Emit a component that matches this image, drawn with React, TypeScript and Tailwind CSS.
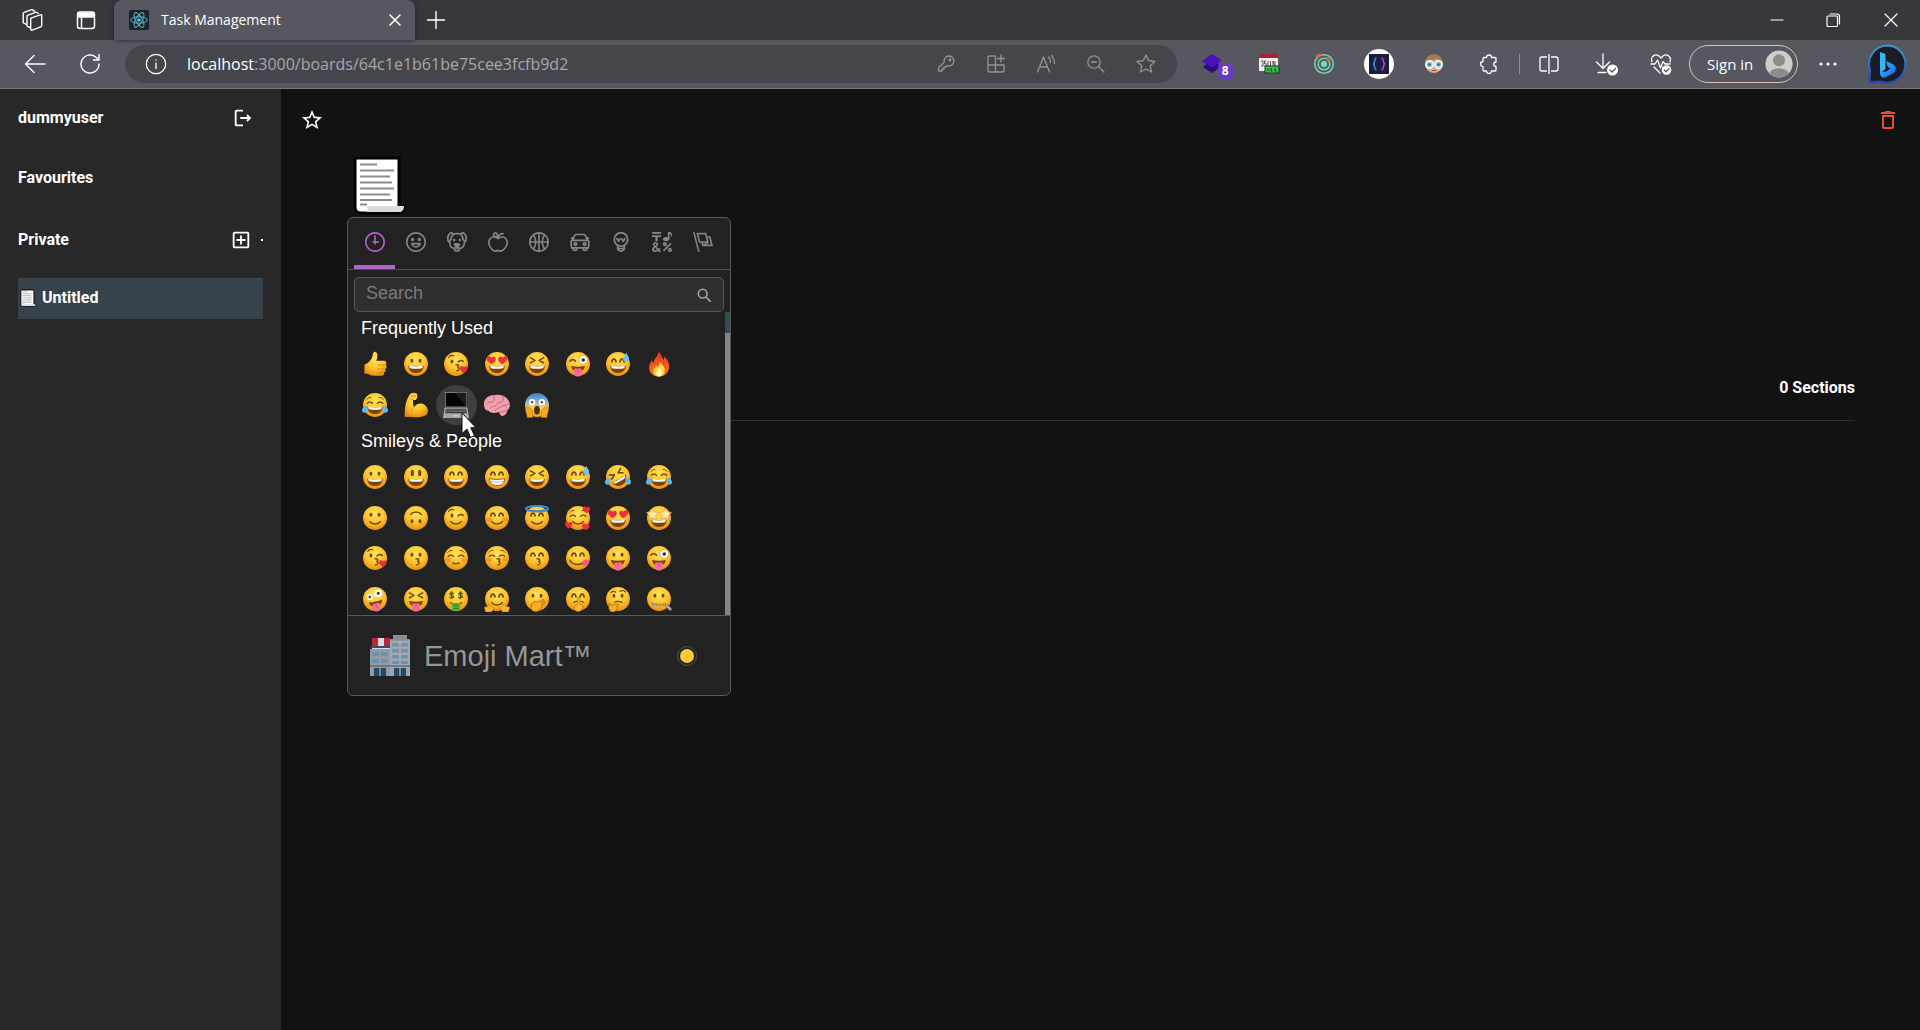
import type { ReactNode } from "react";
import { MdDeleteOutline, MdOutlineAddBox, MdOutlineLogout, MdStarBorder } from "react-icons/md";

const INK = "#764609";

/* ---------- Emoji building blocks (32 x 32 canvas) ---------- */

const eyes: Record<string, ReactNode> = {
  dots: (
    <g fill={INK}>
      <ellipse cx="11" cy="12" rx="1.8" ry="2.5" />
      <ellipse cx="21" cy="12" rx="1.8" ry="2.5" />
    </g>
  ),
  tall: (
    <g fill={INK}>
      <ellipse cx="11.5" cy="11" rx="2" ry="4" />
      <ellipse cx="20.5" cy="11" rx="2" ry="4" />
    </g>
  ),
  happy: (
    <g fill="none" stroke={INK} strokeWidth="2.2" strokeLinecap="round">
      <path d="M8.5 13.5c.5-4.5 4.5-4.5 5 0" />
      <path d="M18.5 13.5c.5-4.5 4.5-4.5 5 0" />
    </g>
  ),
  closed: (
    <g fill="none" stroke={INK} strokeWidth="1.7" strokeLinecap="round">
      <path d="M6.5 14c1.5-2 5-2 6.500 0M19 14c1.5-2 5-2 6.500 0" />
      <path d="M6 9c1-1.500 3-2.500 5-2.300M26 9c-1-1.500-3-2.500-5-2.300" strokeWidth="1.200" />
    </g>
  ),
  squint: (
    <g fill="none" stroke={INK} strokeWidth="2" strokeLinecap="round" strokeLinejoin="round">
      <path d="M8 8.5l5.5 3L8 14.5M24 8.5l-5.5 3 5.5 3" />
    </g>
  ),
  hearts: (
    <g fill="#e8313c">
      <path d="M9 16C4 13 2 9.5 4 7.500s4.500-.5 5 1c1.500-2 5-2 5.500 1S12 15 9 16z" />
      <path d="M23 16c5-3 7-6.500 5-8.500s-4.500-.5-5 1c-1.500-2-5-2-5.500 1S20 15 23 16z" />
    </g>
  ),
  wink: (
    <g fill="none" stroke={INK} strokeLinecap="round">
      <ellipse cx="11" cy="13" rx="1.700" ry="2.400" fill={INK} stroke="none" />
      <path d="M18.500 13.500c2-2.500 5-2 6.500-.5" strokeWidth="1.900" />
      <path d="M7 8c1.500-2.500 4-3 6-2" strokeWidth="1.400" />
    </g>
  ),
  zany: (
    <g>
      <path d="M6 12.500c2-2.500 5-2.500 7 0" fill="none" stroke={INK} strokeWidth="2" strokeLinecap="round" />
      <circle cx="22.500" cy="11" r="5.300" fill="#fff" stroke="#b77a2a" strokeWidth=".6" />
      <circle cx="22.500" cy="11" r="2.200" fill="#3a2a22" />
    </g>
  ),
  stars: (
    <g fill="#ffe9a3" stroke="#d9902a" strokeWidth=".7">
      <path d="M8 4l2.300 4.500 5.200.6-3.600 3.700 1 5.200L8 15.700 3.500 18l.8-5.200L.5 9.200l5.200-.7z" />
      <path d="M24 4l2.300 4.500 5.200.7-3.800 3.600.8 5.200-4.500-2.300-4.900 2.300 1-5.200-3.600-3.700 5.200-.6z" />
    </g>
  ),
  money: (
    <g fill="none" stroke="#5c4a12" strokeWidth="1.500" strokeLinecap="round">
      <path d="M13 9.500c-1-1.500-4.500-1.200-4.500.7s4.500 1 4.500 3-4 2-4.800.4M10.700 7v8.500M24 9.500c-1-1.500-4.500-1.200-4.500.7s4.500 1 4.500 3-4 2-4.800.4M21.700 7v8.500" />
    </g>
  ),
};

const mouths: Record<string, ReactNode> = {
  open: (
    <g>
      <path d="M6.500 18c6 1.300 13 1.300 19 0 0 5.500-4 9-9.500 9s-9.500-3.500-9.500-9z" fill="#7d430b" />
      <path d="M7.500 18.300c5.500 1.100 11.500 1.100 17 0l-.8 3c-5 .9-10.400.9-15.400 0z" fill="#fff" />
    </g>
  ),
  teeth: (
    <g>
      <path d="M6.500 18c6 1.300 13 1.300 19 0 0 5.500-4 8.500-9.500 8.500S6.500 23.500 6.500 18z" fill="#fff" stroke="#9a5d14" strokeWidth="1.200" />
      <path d="M7.500 21.500c5 1 12 1 17 0" stroke="#b9a88f" fill="none" />
    </g>
  ),
  smile: <path d="M9.500 20.500c3 4 10 4 13 0" fill="none" stroke={INK} strokeWidth="1.900" strokeLinecap="round" />,
  small: <path d="M12 22c2 1.600 6 1.600 8 0" fill="none" stroke={INK} strokeWidth="1.700" strokeLinecap="round" />,
  kiss: (
    <path
      d="M16 17c4-.6 4.500 2.500 1.500 3.200 3.500.4 3 3.800-.8 4.200"
      fill="none"
      stroke={INK}
      strokeWidth="1.700"
      strokeLinecap="round"
    />
  ),
  tongue: (
    <g>
      <path d="M7.500 18.500c5 1 12 1 17 0-.5 4.500-4 7-8.500 7s-8-2.500-8.500-7z" fill="#7d430b" />
      <path d="M11.500 21.500h9V27a4.500 4.500 0 0 1-9 0z" fill="#f76aa0" />
      <path d="M16 22v5" stroke="#d8437e" strokeWidth="1" />
    </g>
  ),
};

const heart = (x: number, y: number) => (
  <path
    key={`${x}-${y}`}
    transform={`translate(${x} ${y})`}
    d="M4.500 9C.5 6.500-1 3.500.5 1.500s3.500-.5 4 .8c1-1.800 4.500-1.800 4.700.8S7 8 4.500 9z"
    fill="#e5303e"
  />
);

const blush = (
  <g fill="#f4692a" opacity=".45">
    <ellipse cx="6.500" cy="18" rx="3.500" ry="2.500" />
    <ellipse cx="25.500" cy="18" rx="3.500" ry="2.500" />
  </g>
);

const drop = <path d="M26 2c2 3.500 4 6 3.600 8.500a3.800 3.800 0 0 1-7.500-.3C22 7.500 24.500 5 26 2z" fill="#6cc5ee" />;

const tears = (
  <g fill="#5fb9e8">
    <path d="M7 17c-3 0-7 2-7 5.500s5 4 6 .5c.5-2 .8-4 1-6z" />
    <path d="M25 17c3 0 7 2 7 5.500s-5 4-6 .5c-.5-2-.8-4-1-6z" />
  </g>
);

function face(eye: string, mouth: string, extra?: ReactNode, rotate = 0) {
  return (
    <>
      <circle cx="16" cy="16" r="14.700" fill="url(#skin)" />
      <g transform={`rotate(${rotate} 16 16)`}>
        {eyes[eye]}
        {mouths[mouth]}
      </g>
      {extra}
    </>
  );
}

const art: Record<string, ReactNode> = {
  "thumbs up": (
    <g>
      <path
        d="M3 17c3-1 7-4 9-8 1-2 .8-6 2.500-7.500 2-1.500 4.500.5 4.500 4 0 2.500-.8 4.500-1.300 6.500H27c3 0 4 3.500 2 5 2 1.500 1.500 4.500-.5 5 1.300 1.800.5 4-1.500 4.400.8 2-.3 4.100-3 4.100-6 0-12 .5-15-1.500-2-1-4-1-6-1z"
        fill="url(#skin)"
      />
      <path d="M19 17.200h9M19 22h9M19 26.400h7.500" stroke="#d98a12" strokeWidth="1.100" fill="none" />
    </g>
  ),
  grinning: face("dots", "open"),
  smiley: face("tall", "open"),
  smile: face("happy", "open"),
  grin: face("happy", "teeth"),
  laughing: face("squint", "open"),
  "sweat smile": face("happy", "open", drop),
  rofl: face("squint", "open", tears, -30),
  joy: face("closed", "open", tears),
  "slight smile": face("dots", "smile"),
  "upside down": face("dots", "smile", null, 180),
  wink: face("wink", "smile"),
  blush: face("happy", "smile", blush),
  innocent: face(
    "happy",
    "smile",
    <ellipse cx="16" cy="4.500" rx="13.500" ry="3.300" fill="none" stroke="#3f87cf" strokeWidth="2.600" />,
  ),
  "three hearts": face("closed", "smile", [heart(22, 1), heart(0, 20), heart(21, 22)]),
  "heart eyes": face("hearts", "open"),
  "star struck": face("stars", "open"),
  "kissing heart": face("wink", "kiss", heart(21, 18)),
  kissing: face("dots", "kiss"),
  relaxed: face("closed", "small", blush),
  "kissing closed eyes": face("closed", "kiss", blush),
  "kissing smiling eyes": face("happy", "kiss"),
  yum: face(
    "happy",
    "",
    <g>
      <path d="M6 18.500c3 6.500 12 7 17 3" fill="none" stroke={INK} strokeWidth="1.900" strokeLinecap="round" />
      <path d="M21 22c2-4.500 8-5.500 8.500-1.500.3 3.500-4.500 6.500-7.500 4.500z" fill="#f0558a" />
    </g>,
  ),
  "stuck out tongue": face("dots", "tongue"),
  "winking tongue": face("zany", "tongue"),
  zany: face(
    "",
    "tongue",
    <g>
      <circle cx="9.500" cy="13.500" r="3.800" fill="#fff" />
      <circle cx="9.500" cy="13.500" r="1.500" fill="#33241c" />
      <circle cx="20" cy="9" r="4.800" fill="#fff" />
      <circle cx="20" cy="9" r="1.700" fill="#33241c" />
    </g>,
    -12,
  ),
  "squinting tongue": face("squint", "tongue"),
  "money mouth": face(
    "money",
    "smile",
    <g>
      <path d="M11 21h10v8.500l-5 2-5-2z" fill="#54b33f" />
      <path d="M13 24h6M13 27.500h6" stroke="#1f7423" strokeWidth="1.200" />
    </g>,
  ),
  hugging: face(
    "happy",
    "smile",
    <g fill="#f9b42d" stroke="#c67c0f" strokeWidth=".8">
      <path d="M.5 26l5-1-1.500-2 3-.5 3.500 2.500 1.500 3-3 4H2z" />
      <path d="M31.500 26l-5-1 1.500-2-3-.5-3.500 2.500-1.500 3 3 4h7z" />
    </g>,
  ),
  "hand over mouth": face(
    "dots",
    "",
    <path
      d="M10 21c2-2.500 5-2.500 7-1.500l6-3c1.800-.6 2.300 1 1 2l-3 2 4-1.200c2-.2 2 1.800.3 2.300l-3.500 1.200c2 .3 1.800 2 0 2.400-1.300 3.500-3.800 6.300-7.800 6.300-5 0-7-5.500-4-10.500z"
      fill="#f7ac27"
      stroke="#a9640b"
      strokeWidth=".9"
    />,
  ),
  shushing: face(
    "happy",
    "",
    <g>
      <path d="M10.500 20.500c1.500-1.300 3-1.700 4.500-1.500M19.500 19c1.300 0 2.300.3 3.300 1" stroke={INK} strokeWidth="1.500" fill="none" strokeLinecap="round" />
      <path
        d="M15.500 15c.3-1.800 3-1.700 3 .2v7c3 0 4.300 2 3.300 4.800-1 3-3.800 4.700-6.800 4.200-4-.6-4.500-5.200-2-7.700.8-.8 1.500-1 2.200-1z"
        fill="#fab832"
        stroke="#b06c0d"
        strokeWidth=".9"
      />
    </g>,
  ),
  thinking: face(
    "dots",
    "",
    <g fill="none" stroke={INK} strokeLinecap="round">
      <path d="M7.500 8c1.500-1.500 4-1.500 5.500-.5M18.500 6.500c2-1.500 5-1 6.500.5M12 20c3-1.500 6-1.500 9 .5" strokeWidth="1.600" />
      <path
        d="M5 22c2-.5 2.500 1 2.500 2l8-2c2-.3 2.500 1.700 1 2.300l-2 1c1.500 4-2 7-5.500 6.700C5 31.500 4 27 5 22z"
        fill="#f8ab24"
        stroke="#a9640b"
        strokeWidth=".9"
      />
    </g>,
  ),
  "zipper mouth": face(
    "dots",
    "",
    <g>
      <path d="M7 21.500c6 2 12 2 18 1" stroke="#85878a" strokeWidth="3.400" strokeDasharray="1.800 1" fill="none" />
      <path d="M24 22l5 3 3 4-2.500 1.500-5-4.500z" fill="#a8abad" stroke="#66696b" strokeWidth=".7" />
    </g>,
  ),
  fire: (
    <g>
      <path
        d="M15 1c5 3 4 8 7 10 .5-1.500.3-3-.3-4.500C27 10 30 17 28 22.500 26.500 28 22 31.500 16 31.500S5 28 4 22c-.7-4.500 1.500-8 3.500-11 .3 2 .8 3 2 4C9 9.500 15.500 7 15 1z"
        fill="url(#flame)"
      />
      <path
        d="M16.500 13c3 4 7.500 7 6.500 12-.6 3.500-3 6.500-7 6.500s-7-3-7-6.500c0-3.500 2.500-5 3.500-7.500.8 1 1 2 1.500 3 2-2 3-4.500 2.500-7.500z"
        fill="#ffd84a"
      />
      <path d="M16.500 21c2 2.500 3 3.800 3 6s-1.500 4-3.500 4-3.500-1.800-3.500-4 3-3 4-6z" fill="#fff6b8" />
    </g>
  ),
  muscle: (
    <g>
      <path
        d="M9 2c2-1.500 6-1.500 8 0 1.500 1.500.5 6-1 7.500-1.200.8-3 .3-3.500 0-.5 3.500 0 6 1 9 4-5 10-5.500 14-2s4.500 9 .5 12c-6 3.500-17 2.500-26 2C2 19 3.500 9 9 2z"
        fill="url(#skin)"
      />
      <path d="M10 4.500c2 1 4 1 6 .3M13.500 18.500c-1.500 1-2.500 3-2.500 4.500M12 9.500l-2-1.500" stroke="#cd830f" strokeWidth="1.100" fill="none" />
    </g>
  ),
  laptop: (
    <g>
      <path d="M2.500 0h27v19h-27z" fill="#9a9b9d" />
      <path d="M3.300 1h25.400v17H3.300z" fill="#050505" />
      <path d="M14 1h14.700v17z" fill="#1c1c1c" />
      <path d="M2 19.500h28L32 32H0z" fill="#a9aaab" />
      <path d="M3.500 20.500h25l.8 5.500H2.800z" fill="#3b3b3c" />
      <path d="M4 22.200h24.500M3.600 23.900h25M12 27.500h8l1 3.500H11z" stroke="#8d8e90" strokeWidth=".7" fill="#c5c5c6" />
    </g>
  ),
  brain: (
    <g>
      <path
        d="M0 16C-1 9 5 5 10 4c9-2 17 1 20 6 3 4.500 2 10-1 12.500-1 4-3.500 7.500-7 7-2-.3-2.500-3.500-4-5-4 2-10 1.500-12.500-1.500C2 23 .3 20 0 16z"
        fill="#f0a0ac"
      />
      <path
        d="M4 14c3-4 6 0 8-3s-2-5 1-7M8 20c1-4 6-1 8-5s5-1 7-4-1-5 0-6.500M14 23c0-4 5-2 7-5s6 0 9-3M20 25c2-1 6-1 9-3"
        fill="none"
        stroke="#c4647a"
        strokeWidth="1.200"
        strokeLinecap="round"
      />
    </g>
  ),
  scream: (
    <g>
      <circle cx="16" cy="16" r="14.700" fill="url(#scream)" />
      <g fill="#fff">
        <circle cx="10" cy="12.500" r="4" />
        <circle cx="22" cy="12.500" r="4" />
      </g>
      <circle cx="10" cy="12.500" r="1.300" fill="#3b2a1d" />
      <circle cx="22" cy="12.500" r="1.300" fill="#3b2a1d" />
      <ellipse cx="16" cy="22.500" rx="3.500" ry="5.300" fill="#4b2a12" />
      <path
        d="M2 19c2-1.500 4.500-.5 6.500 2s3 6 2 10.500H4C4 27 1 23 2 19zM30 19c-2-1.500-4.500-.5-6.500 2s-3 6-2 10.500H28C28 27 31 23 30 19z"
        fill="#f6a823"
        stroke="#bd7410"
        strokeWidth=".7"
      />
    </g>
  ),
};

const frequent = [
  "thumbs up", "grinning", "kissing heart", "heart eyes", "laughing", "winking tongue", "sweat smile", "fire",
  "joy", "muscle", "laptop", "brain", "scream",
];

const smileys = [
  "grinning", "smiley", "smile", "grin", "laughing", "sweat smile", "rofl", "joy",
  "slight smile", "upside down", "wink", "blush", "innocent", "three hearts", "heart eyes", "star struck",
  "kissing heart", "kissing", "relaxed", "kissing closed eyes", "kissing smiling eyes", "yum", "stuck out tongue", "winking tongue",
  "zany", "squinting tongue", "money mouth", "hugging", "hand over mouth", "shushing", "thinking", "zipper mouth",
];

const categories: { name: string; paths: string[] }[] = [
  {
    name: "Frequently Used",
    paths: [
      "M13 4h-2l-.001 7H9v2h2v2h2v-2h4v-2h-4z",
      "M12 0C5.373 0 0 5.373 0 12s5.373 12 12 12 12-5.373 12-12S18.627 0 12 0m0 22C6.486 22 2 17.514 2 12S6.486 2 12 2s10 4.486 10 10-4.486 10-10 10",
    ],
  },
  {
    name: "Smileys & People",
    paths: [
      "M12 0C5.373 0 0 5.373 0 12s5.373 12 12 12 12-5.373 12-12S18.627 0 12 0m0 22C6.486 22 2 17.514 2 12S6.486 2 12 2s10 4.486 10 10-4.486 10-10 10",
      "M8 7a2 2 0 1 0-.001 3.999A2 2 0 0 0 8 7M16 7a2 2 0 1 0-.001 3.999A2 2 0 0 0 16 7M15.232 15c-.693 1.195-1.87 2-3.349 2-1.477 0-2.655-.805-3.347-2H15m3-2H6a6 6 0 1 0 12 0",
    ],
  },
  {
    name: "Animals & Nature",
    paths: [
      "M15.5 8a1.5 1.5 0 1 0 .001 3.001A1.5 1.5 0 0 0 15.5 8M8.5 8a1.5 1.5 0 1 0 .001 3.001A1.5 1.5 0 0 0 8.5 8",
      "M18.933 0h-.027c-.97 0-2.138.787-3.018 1.497-1.274-.374-2.612-.51-3.887-.51-1.285 0-2.616.133-3.874.517C7.245.79 6.069 0 5.093 0h-.027C3.352 0 .07 2.67.002 7.026c-.039 2.479.276 4.238 1.04 5.013.254.258.882.677 1.295.882.191 3.177.922 5.238 2.536 6.38.897.637 2.187.949 3.2 1.102C8.04 20.6 8 20.795 8 21c0 1.773 2.35 3 4 3 1.648 0 4-1.227 4-3 0-.201-.038-.393-.072-.586 2.573-.385 5.435-1.877 5.925-7.587.396-.22.887-.568 1.104-.788.763-.774 1.079-2.534 1.04-5.013C23.929 2.67 20.646 0 18.933 0M3.223 9.135c-.237.281-.837 1.155-.884 1.238-.15-.41-.368-1.349-.337-3.291.051-3.281 2.478-4.972 3.091-5.031.256.015.731.27 1.265.646-1.11 1.171-2.275 2.915-2.352 5.125-.133.546-.398.858-.783 1.313M12 22c-.901 0-1.954-.693-2-1 0-.654.475-1.236 1-1.602V20a1 1 0 1 0 2 0v-.602c.524.365 1 .947 1 1.602-.046.307-1.099 1-2 1m3-3.48v.02a4.752 4.752 0 0 0-1.262-1.02c1.092-.516 2.239-1.334 2.239-2.217 0-1.842-1.781-2.195-3.977-2.195-2.196 0-3.978.354-3.978 2.195 0 .883 1.148 1.701 2.238 2.217A4.8 4.8 0 0 0 9 18.539v-.025c-1-.076-2.182-.281-2.973-.842-1.301-.92-1.838-3.045-1.853-6.478l.023-.041c.496-.826 1.49-1.45 1.804-3.102 0-2.047 1.357-3.631 2.362-4.522C9.37 3.178 10.555 3 11.948 3c1.447 0 2.685.192 3.733.57 1 .9 2.316 2.465 2.316 4.48.313 1.651 1.307 2.275 1.803 3.102.035.058.068.117.102.178-.059 5.967-1.949 7.01-4.902 7.19m6.628-8.202c-.037-.065-.074-.13-.113-.195a7.587 7.587 0 0 0-.739-.987c-.385-.455-.648-.768-.782-1.313-.076-2.209-1.241-3.954-2.353-5.124.531-.376 1.004-.63 1.261-.647.636.071 3.044 1.764 3.096 5.031.027 1.81-.347 3.218-.37 3.235",
    ],
  },
  {
    name: "Food & Drink",
    paths: [
      "M17 4.978c-1.838 0-2.876.396-3.68.934.513-1.172 1.768-2.934 4.68-2.934a1 1 0 0 0 0-2c-2.921 0-4.629 1.365-5.547 2.512-.064.078-.119.162-.18.244C11.73 1.838 10.798.023 9.207.023 8.579.022 7.85.306 7 .978 5.027 2.54 5.329 3.902 6.492 4.999 3.609 5.222 0 7.352 0 12.969c0 4.582 4.961 11.009 9 11.009 1.975 0 2.371-.486 3-1 .629.514 1.025 1 3 1 4.039 0 9-6.418 9-11 0-5.953-4.055-8-7-8M8.242 2.546c.641-.508.943-.523.965-.523.426.169.975 1.405 1.357 3.055-1.527-.629-2.741-1.352-2.98-1.846.059-.112.241-.356.658-.686M15 21.978c-1.08 0-1.21-.109-1.559-.402l-.176-.146c-.367-.302-.816-.452-1.266-.452s-.898.15-1.266.452l-.176.146c-.347.292-.477.402-1.557.402-2.813 0-7-5.389-7-9.009 0-5.823 4.488-5.991 5-5.991 1.939 0 2.484.471 3.387 1.251l.323.276a1.995 1.995 0 0 0 2.58 0l.323-.276c.902-.78 1.447-1.251 3.387-1.251.512 0 5 .168 5 6 0 3.617-4.187 9-7 9",
    ],
  },
  {
    name: "Activity",
    paths: [
      "M12 0C5.373 0 0 5.372 0 12c0 6.627 5.373 12 12 12 6.628 0 12-5.373 12-12 0-6.628-5.372-12-12-12m9.949 11H17.05c.224-2.527 1.232-4.773 1.968-6.113A9.966 9.966 0 0 1 21.949 11M13 11V2.051a9.945 9.945 0 0 1 4.432 1.564c-.858 1.491-2.156 4.22-2.392 7.385H13zm-2 0H8.961c-.238-3.165-1.536-5.894-2.393-7.385A9.95 9.95 0 0 1 11 2.051V11zm0 2v8.949a9.937 9.937 0 0 1-4.432-1.564c.857-1.492 2.155-4.221 2.393-7.385H11zm4.04 0c.236 3.164 1.534 5.893 2.392 7.385A9.92 9.92 0 0 1 13 21.949V13h2.04zM4.982 4.887C5.718 6.227 6.726 8.473 6.951 11h-4.9a9.977 9.977 0 0 1 2.931-6.113M2.051 13h4.9c-.226 2.527-1.233 4.771-1.969 6.113A9.972 9.972 0 0 1 2.051 13m16.967 6.113c-.735-1.342-1.744-3.586-1.968-6.113h4.899a9.961 9.961 0 0 1-2.931 6.113",
    ],
  },
  {
    name: "Travel & Places",
    paths: [
      "M6.5 12C5.122 12 4 13.121 4 14.5S5.122 17 6.5 17 9 15.879 9 14.5 7.878 12 6.5 12m0 3c-.275 0-.5-.225-.5-.5s.225-.5.5-.5.5.225.5.5-.225.5-.5.5M17.5 12c-1.378 0-2.5 1.121-2.5 2.5s1.122 2.5 2.5 2.5 2.5-1.121 2.5-2.5-1.122-2.5-2.5-2.5m0 3c-.275 0-.5-.225-.5-.5s.225-.5.5-.5.5.225.5.5-.225.5-.5.5",
      "M22.482 9.494l-1.039-.346L21.4 9h.6c.552 0 1-.439 1-.992 0-.006-.003-.008-.003-.008H23c0-1-.889-2-1.984-2h-.642l-.731-1.717C19.262 3.012 18.091 2 16.764 2H7.236C5.909 2 4.738 3.012 4.357 4.283L3.626 6h-.642C1.889 6 1 7 1 8h.003S1 8.002 1 8.008C1 8.561 1.448 9 2 9h.6l-.043.148-1.039.346a2.001 2.001 0 0 0-1.359 2.097l.751 7.508a1 1 0 0 0 .994.901H3v1c0 1.103.896 2 2 2h2c1.104 0 2-.897 2-2v-1h6v1c0 1.103.896 2 2 2h2c1.104 0 2-.897 2-2v-1h1.096a.999.999 0 0 0 .994-.901l.751-7.508a2.001 2.001 0 0 0-1.359-2.097M6.273 4.857C6.402 4.43 6.788 4 7.236 4h9.527c.448 0 .834.43.963.857L19.313 9H4.688l1.585-4.143zM7 21H5v-1h2v1zm12 0h-2v-1h2v1zm2.189-3H2.811l-.662-6.607L3 11h18l.852.393L21.189 18z",
    ],
  },
  {
    name: "Objects",
    paths: [
      "M12 0a9 9 0 0 0-5 16.482V21s2.035 3 5 3 5-3 5-3v-4.518A9 9 0 0 0 12 0zm0 2c3.86 0 7 3.141 7 7s-3.14 7-7 7-7-3.141-7-7 3.14-7 7-7zM9 17.477c.94.332 1.946.523 3 .523s2.06-.19 3-.523v.834c-.91.436-1.925.689-3 .689a6.924 6.924 0 0 1-3-.69v-.833zm.236 3.07A8.854 8.854 0 0 0 12 21c.965 0 1.888-.167 2.758-.451C14.155 21.173 13.153 22 12 22c-1.102 0-2.117-.789-2.764-1.453z",
      "M14.745 12.449h-.004c-.852-.024-1.188-.858-1.577-1.824-.421-1.061-.703-1.561-1.182-1.566h-.009c-.481 0-.783.497-1.235 1.537-.436.982-.801 1.811-1.636 1.791l-.276-.043c-.565-.171-.853-.691-1.284-1.794-.125-.313-.202-.632-.27-.913-.051-.213-.127-.53-.195-.634C7.067 9.004 7.039 9 6.99 9A1 1 0 0 1 7 7h.01c1.662.017 2.015 1.373 2.198 2.134.486-.981 1.304-2.058 2.797-2.075 1.531.018 2.28 1.153 2.731 2.141l.002-.008C14.944 8.424 15.327 7 16.979 7h.032A1 1 0 1 1 17 9h-.011c-.149.076-.256.474-.319.709a6.484 6.484 0 0 1-.311.951c-.429.973-.79 1.789-1.614 1.789",
    ],
  },
  {
    name: "Symbols",
    paths: [
      "M0 0h11v2H0zM4 11h3V6h4V4H0v2h4zM15.5 17c1.381 0 2.5-1.116 2.5-2.493s-1.119-2.493-2.5-2.493S13 13.13 13 14.507 14.119 17 15.5 17m0-2.986c.276 0 .5.222.5.493 0 .272-.224.493-.5.493s-.5-.221-.5-.493.224-.493.5-.493M21.5 19.014c-1.381 0-2.5 1.116-2.5 2.493S20.119 24 21.5 24s2.5-1.116 2.5-2.493-1.119-2.493-2.5-2.493m0 2.986a.497.497 0 0 1-.5-.493c0-.271.224-.493.5-.493s.5.222.5.493a.497.497 0 0 1-.5.493M22 13l-9 9 1.513 1.5 8.99-9.009zM17 11c2.209 0 4-1.119 4-2.5V2s.985-.161 1.498.949C23.01 4.055 23 6 23 6s1-1.119 1-3.135C24-.02 21 0 21 0h-2v6.347A5.853 5.853 0 0 0 17 6c-2.209 0-4 1.119-4 2.5s1.791 2.5 4 2.5M10.297 20.482l-1.475-1.585a47.54 47.54 0 0 1-1.442 1.129c-.307-.288-.989-1.016-2.045-2.183.902-.836 1.479-1.466 1.729-1.892s.376-.871.376-1.336c0-.592-.273-1.178-.818-1.759-.546-.581-1.329-.871-2.349-.871-1.008 0-1.79.293-2.344.879-.556.587-.832 1.181-.832 1.784 0 .813.419 1.748 1.256 2.805-.847.614-1.444 1.208-1.794 1.784a3.465 3.465 0 0 0-.523 1.833c0 .857.308 1.56.924 2.107.616.549 1.423.823 2.42.823 1.173 0 2.444-.379 3.813-1.137L8.235 24h2.819l-2.09-2.383 1.333-1.135zm-6.736-6.389a1.02 1.02 0 0 1 .73-.286c.31 0 .559.085.747.254a.849.849 0 0 1 .283.659c0 .518-.419 1.112-1.257 1.784-.536-.651-.805-1.231-.805-1.742a.901.901 0 0 1 .302-.669M3.74 22c-.427 0-.778-.116-1.057-.349-.279-.232-.418-.487-.418-.766 0-.594.509-1.288 1.527-2.083.968 1.134 1.717 1.946 2.248 2.438-.921.507-1.686.76-2.3.76",
    ],
  },
  {
    name: "Flags",
    paths: [
      "M0 0l6.084 24H8L1.916 0zM21 5h-4l-1-4H4l3 12h3l1 4h13L21 5zM6.563 3h7.875l2 8H8.563l-2-8zm8.832 10l-2.856 1.904L12.063 13h3.332zM19 13l-1.5-6h1.938l2 8H16l3-2z",
    ],
  },
];

/* ---------- Shared pieces ---------- */

function Line({ size = 20, box = 20, width = 1.3, children }: { size?: number; box?: number; width?: number; children: ReactNode }) {
  return (
    <svg
      width={size}
      height={size}
      viewBox={`0 0 ${box} ${box}`}
      fill="none"
      stroke="currentColor"
      strokeWidth={width}
      strokeLinecap="round"
      strokeLinejoin="round"
      aria-hidden="true"
    >
      {children}
    </svg>
  );
}

function IconButton({ label, className, children }: { label: string; className?: string; children: ReactNode }) {
  return (
    <button type="button" aria-label={label} className={`flex shrink-0 items-center justify-center ${className ?? ""}`}>
      {children}
    </button>
  );
}

function Gradients() {
  return (
    <svg className="absolute h-0 w-0" aria-hidden="true">
      <defs>
        <radialGradient id="skin" cx="50%" cy="32%" r="70%">
          <stop offset="0" stopColor="#ffe45c" />
          <stop offset=".55" stopColor="#fdc42f" />
          <stop offset="1" stopColor="#e88a10" />
        </radialGradient>
        <linearGradient id="flame" x1="0" y1="0" x2="0" y2="1">
          <stop offset="0" stopColor="#e2341d" />
          <stop offset="1" stopColor="#ff7a1a" />
        </linearGradient>
        <linearGradient id="scream" x1="0" y1="0" x2="0" y2="1">
          <stop offset="0" stopColor="#3f7fc4" />
          <stop offset=".35" stopColor="#7fb2dc" />
          <stop offset=".6" stopColor="#f9cf4b" />
          <stop offset="1" stopColor="#f0a01e" />
        </linearGradient>
        <linearGradient id="bing" x1="0" y1="0" x2="1" y2="1">
          <stop offset="0" stopColor="#33c2f5" />
          <stop offset="1" stopColor="#1f5fe0" />
        </linearGradient>
        <linearGradient id="bubble" x1="0" y1="0" x2="0" y2="1">
          <stop offset="0" stopColor="#3f9bbf" />
          <stop offset="1" stopColor="#2b3fb5" />
        </linearGradient>
      </defs>
    </svg>
  );
}

function Scroll({ className }: { className: string }) {
  return (
    <svg viewBox="0 0 54 60" className={className} aria-hidden="true">
      <path d="M3 3h44v48h6c0 5-3 7-6 7H9c-4 0-6-3-6-6z" fill="#fff" stroke="#000" strokeWidth="3" />
      <path d="M15 51h37c0 4-2 6-5 6H14c2-1 2-3 1-6z" fill="#dcdcdc" />
      <path
        d="M8 9.500h17M8 15.500h34M8 21.500h30M8 27.500h32M8 33.500h34M8 39.500h30M8 45h32M8 49.500h7"
        stroke="#8c8c8c"
        strokeWidth="1.800"
      />
    </svg>
  );
}

/* ---------- Browser window ---------- */

function TabStrip() {
  return (
    <div className="flex h-10 items-stretch bg-[#37383b] text-white">
      <IconButton label="Workspaces" className="w-16">
        <Line size={22} box={22} width={1.4}>
          <path d="M10.500 8.800l8.800-3a1 1 0 0 1 1.400 1v9.700a1.500 1.500 0 0 1-1 1.400l-8.600 3.200a1 1 0 0 1-1.400-1V10.200a1.500 1.500 0 0 1 .8-1.400z" />
          <path d="M9 18.500l-2.500-1.200a1 1 0 0 1-.5-1V7.500A1.500 1.500 0 0 1 7 6.100l8-2.900 2.500 1.300" />
          <path d="M5.300 15.300L2.800 14a1 1 0 0 1-.6-1V4.800a1.500 1.500 0 0 1 1-1.400l7.500-2.700L13.500 2" />
        </Line>
      </IconButton>
      <IconButton label="Tab actions menu" className="w-[43px]">
        <Line width={1.5}>
          <rect x="1.500" y="2" width="17" height="16.500" rx="2.500" />
          <path d="M2 3h16v4H2z" fill="currentColor" />
          <path d="M5.500 8v10" />
        </Line>
      </IconButton>
      <div className="ml-[7px] flex w-[301px] items-center rounded-t-lg bg-[#56575f] pl-[15px] shadow-[0_0_4px_#222]">
        <svg width="20" height="20" viewBox="0 0 20 20" className="shrink-0" aria-hidden="true">
          <rect width="20" height="20" rx="2" fill="#1d2228" />
          <g fill="none" stroke="#58b4cf" strokeWidth="1">
            <ellipse cx="10" cy="10" rx="8.300" ry="3.200" />
            <ellipse cx="10" cy="10" rx="8.300" ry="3.200" transform="rotate(60 10 10)" />
            <ellipse cx="10" cy="10" rx="8.300" ry="3.200" transform="rotate(120 10 10)" />
          </g>
          <circle cx="10" cy="10" r="1.600" fill="#7fd4ea" />
        </svg>
        <span className="ml-3 grow text-sm">Task Management</span>
        <IconButton label="Close tab" className="mr-2.5 size-5">
          <Line width={1.6}>
            <path d="M5 5l10 10M15 5L5 15" />
          </Line>
        </IconButton>
      </div>
      <IconButton label="New tab" className="w-[42px]">
        <Line width={1.4}>
          <path d="M10 1.500v17M1.500 10h17" />
        </Line>
      </IconButton>
      <div className="grow" />
      <IconButton label="Minimize" className="w-14">
        <Line size={16} box={16} width={1.2}>
          <path d="M2 8h12" />
        </Line>
      </IconButton>
      <IconButton label="Restore" className="w-14">
        <Line size={16} box={16} width={1.2}>
          <rect x="2" y="4" width="10.500" height="10.500" rx="1" />
          <path d="M5 2h7a2.500 2.500 0 0 1 2.500 2.500V12" />
        </Line>
      </IconButton>
      <IconButton label="Close window" className="w-[59px]">
        <Line size={16} box={16} width={1.2}>
          <path d="M2 2l12 12M14 2L2 14" />
        </Line>
      </IconButton>
    </div>
  );
}

function AddressBar() {
  return (
    <div className="flex h-[38px] grow items-center rounded-full bg-[#45464b] pr-1.5 text-[#93949a]">
      <IconButton label="Site information" className="w-[62px] text-white">
        <Line size={22} box={22} width={1.3}>
          <circle cx="11" cy="11" r="9.700" />
          <path d="M11 10v5.500M11 6.800v.3" />
        </Line>
      </IconButton>
      <span className="grow whitespace-nowrap text-base">
        <span className="text-white">localhost</span>
        <span className="text-[#a6a7ac]">:3000/boards/64c1e1b61be75cee3fcfb9d2</span>
      </span>
      <IconButton label="Passwords" className="w-[50px]">
        <Line>
          <path d="M13 2a5 5 0 1 1-1.800 9.700L10 13H8v2H6v2H2.500v-3.300l5.700-5.600A5 5 0 0 1 13 2z" />
          <circle cx="14" cy="6" r=".8" />
        </Line>
      </IconButton>
      <IconButton label="Apps" className="w-[50px]">
        <Line>
          <path d="M9 2H3a1 1 0 0 0-1 1v14a1 1 0 0 0 1 1h14a1 1 0 0 0 1-1v-6H2M9.500 2v16M15 1v7M11.500 4.500h7" />
        </Line>
      </IconButton>
      <IconButton label="Read aloud" className="w-[50px]">
        <Line>
          <path d="M1.500 18L7.500 3l6 15M3.500 13h8M12.500 3c1.500 1.500 2 3.500 2 5.500M15.500 1.500c2 2.300 3 4.500 3 8" />
        </Line>
      </IconButton>
      <IconButton label="Zoom out" className="w-[50px]">
        <Line>
          <circle cx="8" cy="8" r="6.200" />
          <path d="M12.700 12.700L18 18M5.500 8h5" />
        </Line>
      </IconButton>
      <IconButton label="Add to favorites" className="w-[50px]">
        <Line>
          <path d="M10 1l2.700 5.700 6.200.8-4.600 4.300 1.200 6.200L10 15l-5.500 3 1.200-6.200L1.100 7.500l6.200-.8z" />
        </Line>
      </IconButton>
    </div>
  );
}

function Toolbar() {
  return (
    <div className="flex h-[49px] items-center border-b border-[#77787c] bg-[#56575f] text-white">
      <IconButton label="Back" className="w-[70px]">
        <Line size={22} box={22} width={1.4}>
          <path d="M21 11H2M10 2.500L1.500 11l8.500 8.500" />
        </Line>
      </IconButton>
      <IconButton label="Refresh" className="mr-[15px] w-10">
        <Line size={22} box={22} width={1.4}>
          <path d="M20 11a9 9 0 1 1-3-6.700L20 7M20 1.500V7h-5.500" />
        </Line>
      </IconButton>
      <AddressBar />
      <IconButton label="Layers extension" className="ml-2.5 w-[55px]">
        <span className="relative block">
          <svg width="28" height="30" viewBox="0 0 28 30" aria-hidden="true">
            <path d="M11 11l10 6-10 7-9-6z" fill="#2c0b7c" />
            <path d="M11 5l10 6-10 8-10-7z" fill="#4a11b8" />
          </svg>
          <span className="absolute -right-1 bottom-0 rounded-sm bg-[#6a3bc0] px-1 text-xs font-bold leading-4">8</span>
        </span>
      </IconButton>
      <IconButton label="JSON extension" className="w-[54px]">
        <svg width="22" height="22" viewBox="0 0 22 22" aria-hidden="true">
          <path d="M1 1h19v17H1z" fill="#efeeea" />
          <path d="M1 1h19v4H1z" fill="#a82238" />
          <path d="M3 8h2v5H3M8 8H6.500v2.500H8V13H6.500M10 8v5M12.500 8v5M15 13V8l2 5V8" stroke="#555" fill="none" />
          <rect x="7" y="13" width="14" height="7" fill="#3fbf4c" stroke="#0d3f14" />
          <path d="M10 15v3M13 15v3h1.500M17 15v3h1.500" stroke="#0d3f14" fill="none" />
        </svg>
      </IconButton>
      <IconButton label="Target extension" className="w-[55px]">
        <Line size={22} box={22} width={1.6}>
          <g stroke="#6fd3b0">
            <circle cx="11" cy="11" r="9.300" />
            <circle cx="11" cy="11" r="5.800" />
            <circle cx="11" cy="11" r="2.400" fill="#6fe6bb" />
          </g>
          <path d="M4 3l3-1M14 5l2 2" stroke="#d9683a" strokeWidth="2.500" />
        </Line>
      </IconButton>
      <IconButton label="Braces extension" className="w-[55px]">
        <span className="flex size-[30px] items-center justify-center rounded-full bg-white">
          <svg width="20" height="20" viewBox="0 0 20 20" aria-hidden="true">
            <rect width="20" height="20" fill="#1d1c3b" />
            <g fill="none" strokeWidth="1.500">
              <path d="M7.500 4C5.500 4 6 8 4.500 10c1.500 2 1 6 3 6" stroke="#4c8df0" />
              <path d="M12.500 4c2 0 1.500 4 3 6-1.500 2-1 6-3 6" stroke="#b34bd6" />
            </g>
          </svg>
        </span>
      </IconButton>
      <IconButton label="Profile extension" className="w-[55px]">
        <svg width="20" height="20" viewBox="0 0 20 20" aria-hidden="true">
          <circle cx="10" cy="10" r="9" fill="#e6a789" />
          <path d="M1 9a9 9 0 0 1 18 0L13 5z" fill="#a87b58" />
          <g fill="#8ad3e6" stroke="#f4f8f9" strokeWidth="1.600">
            <circle cx="5.500" cy="10.500" r="3.700" />
            <circle cx="14.500" cy="10.500" r="3.700" />
          </g>
          <circle cx="5.500" cy="10.500" r="1.300" fill="#2d5966" />
          <circle cx="14.500" cy="10.500" r="1.300" fill="#2d5966" />
          <path d="M8 16.500h4" stroke="#b5483d" />
        </svg>
      </IconButton>
      <IconButton label="Extensions" className="w-[55px]">
        <Line>
          <path d="M7.500 3.500a2.500 2.500 0 0 1 5 0H16a1 1 0 0 1 1 1V8a2.200 2.200 0 0 0 0 4.400V16a1 1 0 0 1-1 1h-3.500a2.500 2.500 0 0 1-5 0H5a1 1 0 0 1-1-1v-3.500a2.500 2.500 0 0 1 0-5v-3a1 1 0 0 1 1-1z" />
        </Line>
      </IconButton>
      <span className="ml-[3px] h-5 w-px bg-[#8b8c92]" />
      <IconButton label="Split screen" className="w-[58px]">
        <Line>
          <path d="M7.500 3H3a2 2 0 0 0-2 2v10a2 2 0 0 0 2 2h4.500M12.500 3H17a2 2 0 0 1 2 2v10a2 2 0 0 1-2 2h-4.500M10 0v20" />
        </Line>
      </IconButton>
      <IconButton label="Downloads" className="w-[57px]">
        <Line size={24} box={24}>
          <path d="M8 2v14M1.500 10L8 16.500 14.500 10M3 20.500h8" />
          <circle cx="17.500" cy="18" r="5.500" fill="#fff" stroke="none" />
          <path d="M15 18l2 2 3.500-3.500" stroke="#56575f" />
        </Line>
      </IconButton>
      <IconButton label="Browser essentials" className="mr-0.5 w-[52px]">
        <Line size={22} box={22}>
          <path d="M2 8.500C0 4 5 0 9 3l2 2 2-2c4-3 9 1 7 6M1 11h4l2.500-4 3 8L13 8.500l2 2.500h5M4 14l6 6" />
          <circle cx="16.500" cy="17" r="4.800" fill="#fff" stroke="none" />
          <path d="M14.300 17l1.700 1.700 3-3" stroke="#56575f" />
        </Line>
      </IconButton>
      <button type="button" className="flex h-[38px] w-[109px] shrink-0 items-center rounded-full border border-[#dcc0b2] pl-[17px] text-[15px] font-medium">
        <span className="grow whitespace-nowrap text-left">Sign in</span>
        <svg width="28" height="28" viewBox="0 0 30 30" className="mr-1 shrink-0" aria-hidden="true">
          <clipPath id="avatar">
            <circle cx="15" cy="15" r="14.500" />
          </clipPath>
          <g clipPath="url(#avatar)">
            <path d="M0 0h30v30H0z" fill="#cfcdca" />
            <circle cx="15" cy="11" r="6.500" fill="#8f8d8b" />
            <ellipse cx="15" cy="26" rx="10.500" ry="6.500" fill="#8f8d8b" />
          </g>
        </svg>
      </button>
      <IconButton label="Settings and more" className="mr-2 w-[60px]">
        <svg width="20" height="6" viewBox="0 0 20 6" fill="currentColor" aria-hidden="true">
          <circle cx="3" cy="3" r="1.600" />
          <circle cx="10" cy="3" r="1.600" />
          <circle cx="17" cy="3" r="1.600" />
        </svg>
      </IconButton>
      <IconButton label="Bing chat" className="mr-3 w-[42px]">
        <svg width="40" height="40" viewBox="0 0 40 40" aria-hidden="true">
          <path d="M20 1.500A18.500 18.500 0 1 1 14 37.500L2.500 38 3 26A18.500 18.500 0 0 1 20 1.500z" fill="#171c26" stroke="url(#bubble)" strokeWidth="2.200" />
          <path d="M13 8l5.500 2v15L13 29z" fill="#37b4f4" />
          <path d="M13 27l5.500 1 5-3.500-2.500-1.500-2-6 7.500 3.500c3 2 3 6.500.3 8.500L18 33.500c-3 .8-5-1.500-5-4z" fill="url(#bing)" />
        </svg>
      </IconButton>
    </div>
  );
}

/* ---------- Page ---------- */

function Sidebar() {
  return (
    <aside className="w-[281px] shrink-0 bg-[#282828] px-[18px] font-[Roboto,sans-serif] text-base font-bold text-white">
      <div className="flex h-[58px] items-center justify-between pr-2">
        <span>dummyuser</span>
        <IconButton label="Log out" className="size-6">
          <MdOutlineLogout size={22} />
        </IconButton>
      </div>
      <div className="flex h-[62px] items-center">
        <span>Favourites</span>
      </div>
      <div className="flex h-[61px] items-center">
        <span className="grow">Private</span>
        <IconButton label="Add board" className="size-6">
          <MdOutlineAddBox size={22} />
        </IconButton>
        <span className="ml-2 size-0.5 bg-white" />
      </div>
      <a href="#untitled" className="mt-2 flex h-[41px] items-center bg-[#38424a] pb-0.5 pl-0.5">
        <Scroll className="h-[18px] w-4" />
        <span className="ml-1.5">Untitled</span>
      </a>
    </aside>
  );
}

function EmojiGrid({ names, className }: { names: string[]; className: string }) {
  return (
    <div className={`ml-[7px] grid w-[324px] shrink-0 grid-cols-8 ${className}`}>
      {names.map((name) => (
        <button
          key={name}
          type="button"
          aria-label={name}
          className={`flex items-center justify-center rounded-full ${name === "laptop" ? "bg-[#3f3f3f]" : ""}`}
        >
          <svg width="26" height="26" viewBox="0 0 32 32" aria-hidden="true">
            {art[name]}
          </svg>
        </button>
      ))}
    </div>
  );
}

function EmojiPicker() {
  return (
    <section
      aria-label="Emoji picker"
      className="absolute top-full left-px z-10 w-[384px] rounded-[6px] border border-[#585858] bg-[#222222] font-['Liberation_Sans',Arial,sans-serif]"
    >
      <nav className="flex h-[52px] border-b border-[#4d4d4d] px-1.5" aria-label="Emoji categories">
        {categories.map((category, index) => (
          <button
            key={category.name}
            type="button"
            aria-label={category.name}
            className={`flex grow basis-0 items-center justify-center border-b-4 ${
              index === 0 ? "border-[#ae65c5] text-[#ae65c5]" : "border-transparent text-[#858585]"
            }`}
          >
            <svg width="20" height="20" viewBox="0 0 24 24" fill="currentColor" aria-hidden="true">
              {category.paths.map((d) => (
                <path key={d} d={d} />
              ))}
            </svg>
          </button>
        ))}
      </nav>
      <div className="mx-1.5 mt-[7px] flex h-[35px] items-center rounded-[5px] border border-[#575757] bg-[#2f2f2f] px-[11px]">
        <input
          type="search"
          aria-label="Search"
          placeholder="Search"
          className="min-w-0 grow bg-transparent pb-[3px] text-lg text-white outline-none placeholder:text-[#7b7b7b]"
        />
        <IconButton label="Submit search" className="size-4 text-[#a5a5a5]">
          <Line size={14} box={16} width={1.8}>
            <circle cx="6.500" cy="6.500" r="5" />
            <path d="M10.500 10.500l4.500 4.500" />
          </Line>
        </IconButton>
      </div>
      <div className="flex h-[303px]">
        <div className="flex grow flex-col overflow-hidden text-lg text-white">
          <h2 className="ml-[13px] h-8 shrink-0 leading-8">Frequently Used</h2>
          <EmojiGrid names={frequent} className="h-[81px] grid-rows-2" />
          <h2 className="ml-[13px] h-8 shrink-0 leading-8">Smileys &amp; People</h2>
          <EmojiGrid names={smileys} className="h-[162px] grid-rows-4" />
        </div>
        <div className="w-[5px] shrink-0 bg-[#858585]">
          <div className="h-[21px] bg-[#2f4f4f]" />
        </div>
      </div>
      <footer className="flex h-20 items-center border-t border-[#585858] pr-[33px] pl-[21px]">
        <svg width="42" height="42" viewBox="0 0 42 42" aria-hidden="true">
          <path d="M1 14h20v27H1z" fill="#929ca6" />
          <path d="M21 4h20v37H21z" fill="#a0a9b1" />
          <path d="M24 0h14v4H24zM21 4h20v1.500H21z" fill="#868d93" />
          <path d="M3 3h18v11H3z" fill="#d9dde2" />
          <path d="M3 3h6v9H3zM15 3h6v9h-6z" fill="#bf2631" />
          <path d="M2 11h19v2H2z" fill="#32507f" />
          <path
            d="M3 17h7v4H3zM12 17h7v4h-7zM3 24h7v4H3zM12 24h7v4h-7zM23 8h7v3.500h-7zM32 8h7v3.500h-7zM23 14h7v3.500h-7zM32 14h7v3.500h-7zM23 20h7v3.500h-7zM32 20h7v3.500h-7zM23 26h7v3h-7zM32 26h7v3h-7z"
            fill="#7291aa"
          />
          <path d="M1 30h40v2H1z" fill="#6f7880" />
          <path d="M5 33h12v8H5zM25 33h12v8H25z" fill="#284763" />
          <path d="M11 33v8M31 33v8" stroke="#7ba7c9" strokeWidth="1.500" />
        </svg>
        <span className="ml-[13px] grow whitespace-nowrap text-[29px] leading-9 text-[#969696]">Emoji Mart™</span>
        <IconButton label="Skin tone" className="size-5 rounded-full border border-[#505050]">
          <span className="size-3.5 rounded-full bg-[#ffc93a]" />
        </IconButton>
      </footer>
    </section>
  );
}

function Board() {
  return (
    <main className="grow bg-[#121212] text-white">
      <div className="flex h-[62px] items-center justify-between pr-5 pl-[19px]">
        <IconButton label="Favourite board" className="size-6">
          <MdStarBorder size={26} />
        </IconButton>
        <IconButton label="Delete board" className="size-6 text-[#ea4a40]">
          <MdDeleteOutline size={28} />
        </IconButton>
      </div>
      <div className="px-[65px]">
        <div className="relative flex h-[66px] items-start pt-1">
          <IconButton label="Change icon" className="ml-1.5">
            <Scroll className="h-[60px] w-[54px]" />
          </IconButton>
          <EmojiPicker />
          <svg width="16" height="27" viewBox="0 0 16 27" className="absolute top-[261px] left-[115px] z-20" aria-hidden="true">
            <path d="M1 1v20.500l5-4.500 3.500 8.500 4-1.800-3.700-8H15z" fill="#fff" stroke="#111" strokeWidth="1" />
          </svg>
        </div>
        <div className="flex h-[204px] items-end justify-end border-b border-[#303030] pb-5 font-[Roboto,sans-serif] text-base font-bold">
          <span>0 Sections</span>
        </div>
      </div>
    </main>
  );
}

export default function App() {
  return (
    <div className="flex h-screen flex-col bg-[#121212] font-['Open_Sans',sans-serif]">
      <Gradients />
      <header className="shrink-0">
        <TabStrip />
        <Toolbar />
      </header>
      <div className="flex min-h-0 grow">
        <Sidebar />
        <Board />
      </div>
    </div>
  );
}
